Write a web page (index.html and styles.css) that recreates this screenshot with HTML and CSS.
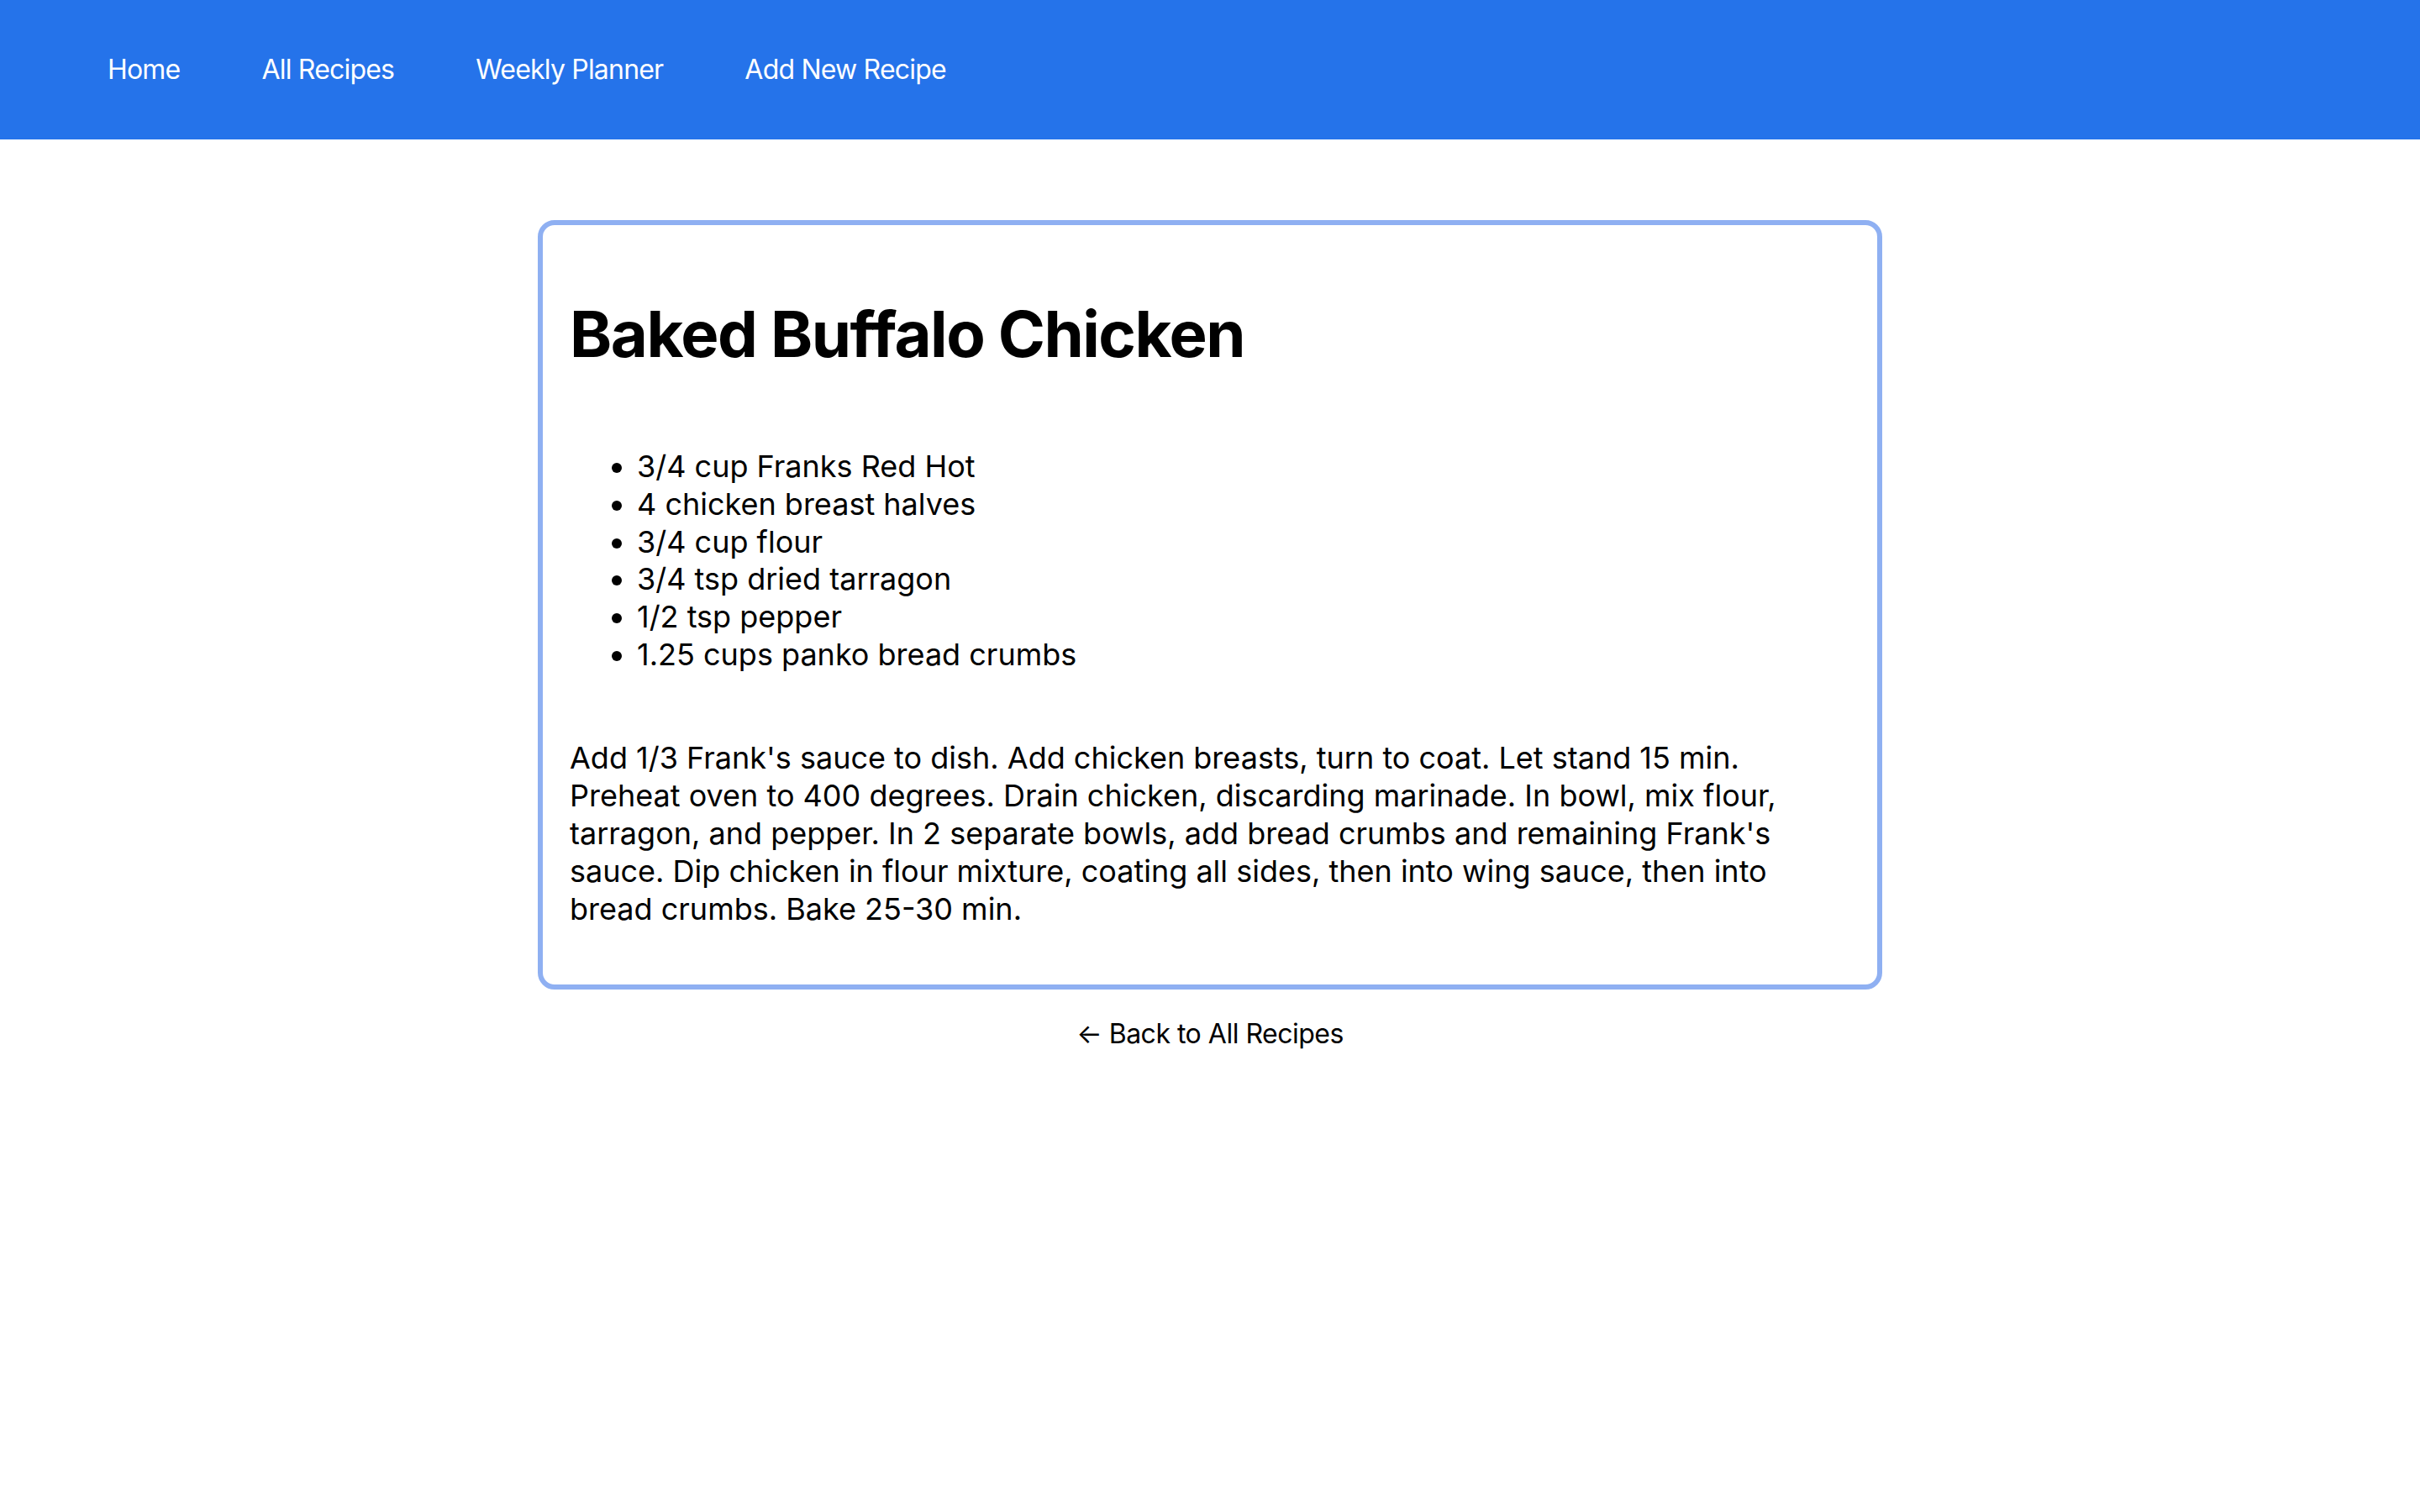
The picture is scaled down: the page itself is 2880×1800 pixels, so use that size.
FILE: index.html
```html
<!DOCTYPE html>
<html lang="en">
<head>
<meta charset="utf-8">
<title>Baked Buffalo Chicken</title>
<link rel="stylesheet" href="styles.css">
</head>
<body>
<nav class="topnav">
  <a class="nav-link" href="#">Home</a>
  <a class="nav-link" href="#">All Recipes</a>
  <a class="nav-link" href="#">Weekly Planner</a>
  <a class="nav-link" href="#">Add New Recipe</a>
</nav>
<main class="page">
  <article class="recipe-card">
    <h1 class="recipe-title">Baked Buffalo Chicken</h1>
    <ul class="ingredients">
      <li>3/4 cup Franks Red Hot</li>
      <li>4 chicken breast halves</li>
      <li>3/4 cup flour</li>
      <li>3/4 tsp dried tarragon</li>
      <li>1/2 tsp pepper</li>
      <li>1.25 cups panko bread crumbs</li>
    </ul>
    <p class="instructions">Add 1/3 Frank's sauce to dish. Add chicken breasts, turn to coat. Let stand 15 min. Preheat oven to 400 degrees. Drain chicken, discarding marinade. In bowl, mix flour, tarragon, and pepper. In 2 separate bowls, add bread crumbs and remaining Frank's sauce. Dip chicken in flour mixture, coating all sides, then into wing sauce, then into bread crumbs. Bake 25-30 min.</p>
  </article>
  <a class="back-link" href="#">&larr; Back to All Recipes</a>
</main>
</body>
</html>
```

FILE: styles.css
```css
* {
  box-sizing: border-box;
}

html, body {
  margin: 0;
  padding: 0;
  background: #ffffff;
}

body {
  font-family: Inter, "Noto Sans", sans-serif;
  font-size: 36px;
  line-height: 44.8px;
  color: #000000;
}

.topnav {
  height: 166px;
  background: #2573ea;
  display: flex;
  align-items: center;
  gap: 97px;
  padding-left: 128px;
}

.nav-link {
  color: #ffffff;
  text-decoration: none;
  font-size: 32px;
  line-height: 44.8px;
  letter-spacing: -0.8px;
}

.page {
  display: flex;
  flex-direction: column;
  align-items: center;
  padding-top: 96px;
}

.recipe-card {
  width: 1600px;
  border: 6px solid #8fb0f2;
  border-radius: 20px;
  padding: 32px 32px 68px;
}

.recipe-title {
  font-size: 76px;
  font-weight: 700;
  line-height: 93.6px;
  margin: 51px 0 0;
  letter-spacing: -1.5px;
}

.ingredients {
  margin: 88.5px 0 0;
  padding-left: 80px;
}

.instructions {
  margin: 78.6px 0 0;
}

.back-link {
  margin-top: 31px;
  color: #000000;
  text-decoration: none;
  font-size: 32px;
  line-height: 44.8px;
  letter-spacing: -0.5px;
}
```
